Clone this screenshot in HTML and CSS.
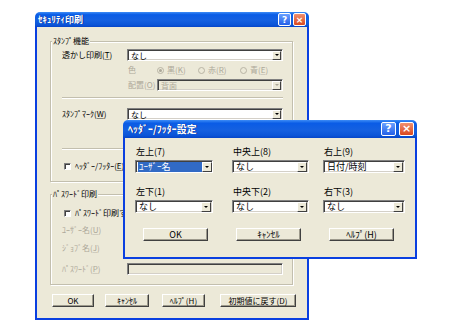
FILE: index.html
```html
<!DOCTYPE html>
<html lang="ja">
<head>
  <meta charset="UTF-8" />
  <title>ｾｷｭﾘﾃｨ印刷</title>
  <link rel="stylesheet" href="styles.css">
</head>
<body>
  <div class="desk">

    <div class="win outer">
      <div class="title">
        <span class="title-text">ｾｷｭﾘﾃｨ印刷</span>
        <span class="tbtn help">?</span>
        <span class="tbtn close">×</span>
      </div>
      <div class="body">
        <div class="group g1">
          <span class="legend">ｽﾀﾝﾌﾟ機能</span>
          <div class="row r1">
            <span class="lbl w65">透かし印刷(<u>T</u>)</span>
            <div class="select w156"><span class="val">なし</span><i class="arrow"></i></div>
          </div>
          <div class="row r2 indent off">
            <span class="lbl w29">色</span>
            <span class="radio on w41"><i></i>黒(<u>K</u>)</span>
            <span class="radio w42"><i></i>赤(<u>R</u>)</span>
            <span class="radio"><i></i>青(<u>E</u>)</span>
          </div>
          <div class="row r3 indent off">
            <span class="lbl w29">配置(<u>O</u>)</span>
            <div class="select w126 disabled"><span class="val">背面</span><i class="arrow"></i></div>
          </div>
          <div class="sep s1"></div>
          <div class="row r4">
            <span class="lbl w65">ｽﾀﾝﾌﾟﾏｰｸ(<u>W</u>)</span>
            <div class="select w156"><span class="val">なし</span><i class="arrow"></i></div>
          </div>
          <div class="sep s2"></div>
          <div class="row r5">
            <span class="check"><i></i>ﾍｯﾀﾞｰ/ﾌｯﾀｰ(<u>E</u>)</span>
          </div>
        </div>

        <div class="group g2">
          <span class="legend">ﾊﾟｽﾜｰﾄﾞ印刷</span>
          <div class="row p1">
            <span class="check"><i></i>ﾊﾟｽﾜｰﾄﾞ印刷する</span>
          </div>
          <div class="row p2 off">
            <span class="lbl w65">ﾕｰｻﾞｰ名(<u>U</u>)</span>
          </div>
          <div class="row p3 off">
            <span class="lbl w65">ｼﾞｮﾌﾞ名(<u>J</u>)</span>
          </div>
          <div class="row p4 off">
            <span class="lbl w65">ﾊﾟｽﾜｰﾄﾞ(<u>P</u>)</span>
            <div class="field w156 disabled"></div>
          </div>
        </div>

        <div class="buttons">
          <span class="btn b-ok">OK</span>
          <span class="btn b-cancel">ｷｬﾝｾﾙ</span>
          <span class="btn b-help">ﾍﾙﾌﾟ(<u>H</u>)</span>
          <span class="btn b-reset">初期値に戻す(<u>D</u>)</span>
        </div>
      </div>
    </div>

    <div class="win inner">
      <div class="title">
        <span class="title-text">ﾍｯﾀﾞｰ/ﾌｯﾀｰ設定</span>
        <span class="tbtn help">?</span>
        <span class="tbtn close">×</span>
      </div>
      <div class="body">
        <div class="hf-row first">
          <div class="cell">
            <span class="cap">左上(7)</span>
            <div class="select w78"><span class="val picked">ﾕｰｻﾞｰ名</span><i class="arrow"></i></div>
          </div>
          <div class="cell">
            <span class="cap">中央上(8)</span>
            <div class="select w77"><span class="val">なし</span><i class="arrow"></i></div>
          </div>
          <div class="cell">
            <span class="cap">右上(9)</span>
            <div class="select w82"><span class="val">日付/時刻</span><i class="arrow"></i></div>
          </div>
        </div>
        <div class="hf-row second">
          <div class="cell">
            <span class="cap">左下(1)</span>
            <div class="select w78"><span class="val">なし</span><i class="arrow"></i></div>
          </div>
          <div class="cell">
            <span class="cap">中央下(2)</span>
            <div class="select w77"><span class="val">なし</span><i class="arrow"></i></div>
          </div>
          <div class="cell">
            <span class="cap">右下(3)</span>
            <div class="select w82"><span class="val">なし</span><i class="arrow"></i></div>
          </div>
        </div>
        <div class="hf-buttons">
          <span class="btn">OK</span>
          <span class="btn">ｷｬﾝｾﾙ</span>
          <span class="btn">ﾍﾙﾌﾟ(<u>H</u>)</span>
        </div>
      </div>
    </div>

  </div>
</body>
</html>
```

FILE: styles.css
```css
* {
  margin: 0;
  padding: 0;
  box-sizing: border-box;
}
body {
  background: #fff;
  font-family: "Noto Sans CJK JP", "Noto Sans", sans-serif;
  font-size: 8px;
  line-height: 10px;
  color: #000;
}
u {
  text-decoration: underline;
  text-decoration-color: #8a887c;
}
.off u {
  text-decoration-color: #cfccbf;
}
.desk {
  position: relative;
  width: 450px;
  height: 330px;
  overflow: hidden;
}

/* windows */
.win {
  position: absolute;
  display: flex;
  flex-direction: column;
}
.outer {
  left: 35px;
  top: 12px;
  width: 274px;
  height: 308px;
}
.inner {
  left: 123px;
  top: 120px;
  width: 294px;
  height: 139px;
  font-size: 9px;
}
.title {
  flex: none;
  height: 15px;
  display: flex;
  align-items: center;
  padding: 0 3px 0 3px;
  border-radius: 5px 5px 0 0;
  background: linear-gradient(#3d8cf6 0%, #0a5ce6 18%, #1560e0 55%, #0b55d8 85%, #0645c8 100%);
  color: #fff;
  font-weight: bold;
  font-size: 9px;
}
.inner .title {
  height: 18px;
  padding: 0 3px 0 5px;
  font-size: 10px;
}
.title-text {
  flex: 1;
  text-shadow: 1px 0 0 #0a2a8a;
}
.tbtn {
  flex: none;
  width: 13px;
  height: 13px;
  margin-left: 2px;
  border: 1px solid #fff;
  border-radius: 2px;
  display: flex;
  align-items: center;
  justify-content: center;
  color: #fff;
  font-family: "DejaVu Sans", sans-serif;
  font-weight: bold;
  font-size: 9px;
  line-height: 10px;
}
.inner .tbtn {
  width: 15px;
  height: 14px;
  font-size: 11px;
}
.help {
  background: linear-gradient(#6aa0ff, #2360e8);
}
.close {
  background: linear-gradient(#f09070, #d9481f);
}
.inner .close {
  margin-left: 3px;
}
.body {
  flex: 1;
  background: #ece9d8;
  border: 2px solid #0a3fe0;
  border-top: 0;
}

/* groups */
.group {
  position: relative;
  border: 1px solid #c3bfae;
  box-shadow: inset 1px 1px 0 #fff, 1px 1px 0 #fff;
  padding-left: 11px;
  display: flex;
  flex-direction: column;
  width: 243px;
  margin-left: 13px;
}
.g1 {
  margin-top: 14px;
  height: 141px;
}
.g2 {
  margin-top: 12px;
  height: 91px;
}
.legend {
  position: absolute;
  top: -6px;
  left: 1px;
  padding: 0 1px;
  background: #ece9d8;
  line-height: 10px;
}
.row {
  display: flex;
  align-items: center;
  height: 12px;
  white-space: nowrap;
}
.indent {
  padding-left: 66px;
}
.off {
  color: #aca899;
}
.r1 { margin-top: 7px; }
.r2 { margin-top: 3px; }
.r3 { margin-top: 3px; }
.r4 { margin-top: 9px; }
.r5 { margin-top: 10px; padding-left: 2px; }
.p1 { margin-top: 12px; padding-left: 2px; }
.p2 { margin-top: 5px; }
.p3 { margin-top: 6px; }
.p4 { margin-top: 9px; }
.sep {
  width: 221px;
  height: 2px;
  border-top: 1px solid #c3bfae;
  border-bottom: 1px solid #fff;
}
.s1 { margin-top: 6px; }
.s2 { margin-top: 28px; }

.lbl { flex: none; }
.w29 { width: 29px; }
.w41 { width: 41px; }
.w42 { width: 42px; }
.w65 { width: 65px; }
.w77 { width: 77px; }
.w78 { width: 78px; }
.w82 { width: 82px; }
.w126 { width: 126px; }
.w156 { width: 156px; }

/* combo boxes */
.select, .field {
  flex: none;
  position: relative;
  height: 12px;
  display: flex;
  align-items: center;
  background: #fff;
  border: 1px solid;
  border-color: #808080 #fff #fff #808080;
  box-shadow: inset 1px 1px 0 #404040, inset -1px -1px 0 #d4d0c8;
  padding: 0 1px 0 2px;
}
.inner .select {
  height: 13px;
}
.select .val {
  flex: 1;
  line-height: 9px;
  padding: 0 1px;
  color: #000;
}
.val.picked {
  flex: none;
  width: 64px;
  background: #316ac5;
  color: #fff;
}
.inner .select .val {
  line-height: 10px;
}
.disabled {
  background: #ece9d8;
}
.disabled .val {
  color: #aca899;
}
.arrow {
  margin-left: auto;
  flex: none;
  width: 9px;
  height: 9px;
  background: #ece9d8;
  border: 1px solid;
  border-color: #fff #404040 #404040 #fff;
  display: flex;
  align-items: center;
  justify-content: center;
}
.arrow::after {
  content: "";
  border-left: 2px solid transparent;
  border-right: 2px solid transparent;
  border-top: 2px solid #000;
}
.disabled .arrow::after {
  border-top-color: #aca899;
}
.inner .arrow {
  width: 10px;
  height: 10px;
}

/* radios and checks */
.radio, .check {
  display: flex;
  align-items: center;
  flex: none;
}
.radio i {
  width: 7px;
  height: 7px;
  border-radius: 50%;
  border: 1px solid #b8b4a4;
  background: #ece9d8;
  margin-right: 3px;
  display: flex;
  align-items: center;
  justify-content: center;
}
.radio.on i::after {
  content: "";
  width: 3px;
  height: 3px;
  border-radius: 50%;
  background: #aca899;
}
.check i {
  width: 7px;
  height: 7px;
  border: 1px solid;
  border-color: #808080 #fff #fff #808080;
  box-shadow: inset 1px 1px 0 #404040;
  background: #fff;
  margin-right: 4px;
}

/* buttons */
.btn {
  flex: none;
  height: 13px;
  display: flex;
  align-items: center;
  justify-content: center;
  background: #ece9d8;
  border: 1px solid;
  border-color: #fff #404040 #404040 #fff;
  box-shadow: inset -1px -1px 0 #9d9a8c;
  white-space: nowrap;
}
.buttons {
  display: flex;
  margin: 9px 0 0 15px;
}
.b-ok { width: 42px; }
.b-cancel { width: 44px; margin-left: 11px; }
.b-help { width: 43px; margin-left: 13px; }
.b-reset { width: 76px; margin-left: 15px; }

/* header / footer dialog */
.inner .body {
  padding-left: 10px;
}
.hf-row {
  display: grid;
  grid-template-columns: 97px 91px 82px;
}
.hf-row.first { margin-top: 9px; }
.hf-row.second { margin-top: 14px; }
.cell {
  display: flex;
  flex-direction: column;
}
.cap {
  height: 10px;
  line-height: 10px;
  padding-left: 1px;
  margin-bottom: 3px;
  white-space: nowrap;
}
.hf-buttons {
  display: flex;
  gap: 28px;
  margin: 15px 0 0 8px;
}
.hf-buttons .btn {
  width: 65px;
}
```
